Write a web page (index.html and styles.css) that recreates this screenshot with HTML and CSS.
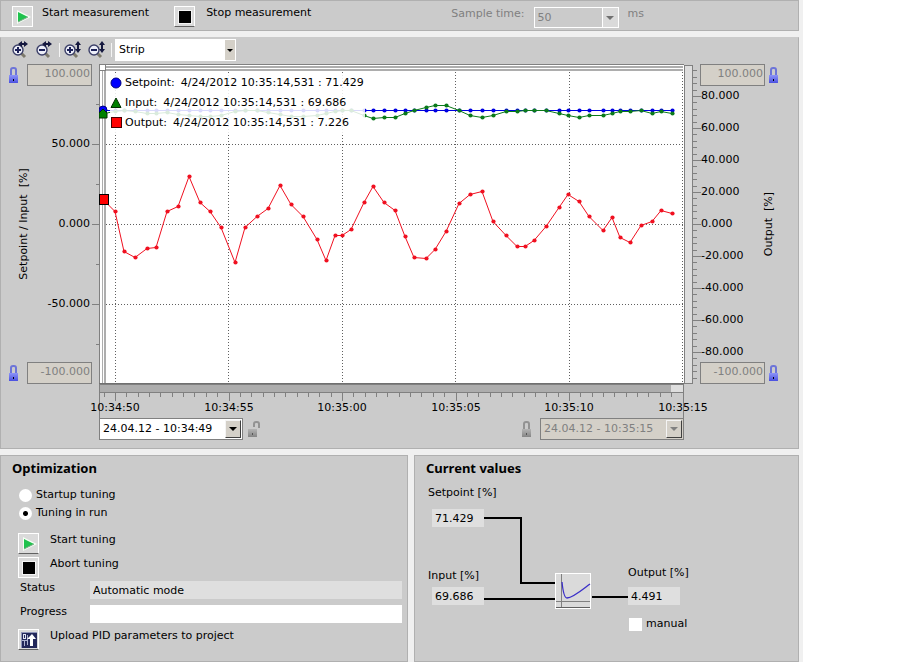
FILE: index.html
```html
<!DOCTYPE html>
<html lang="en">
<head>
    <meta charset="UTF-8">
    <meta name="viewport" content="width=device-width, initial-scale=1.0">
    <title>PID Commissioning</title>
    <link rel="stylesheet" href="styles.css">
</head>
<body>
    <!-- Shared icons -->
    <svg class="defs" aria-hidden="true">
        <defs>
            <linearGradient id="lock-blue" x1="0" y1="0" x2="0" y2="1">
                <stop offset="0" stop-color="#8d94f8"/>
                <stop offset="1" stop-color="#4a50e0"/>
            </linearGradient>
            <linearGradient id="lock-gray" x1="0" y1="0" x2="0" y2="1">
                <stop offset="0" stop-color="#b4b4b4"/>
                <stop offset="1" stop-color="#858585"/>
            </linearGradient>
            <symbol id="play" viewBox="0 0 18 18">
                <path d="M3 2 L17 9 L3 16 Z" fill="#f4fff4"/>
                <path d="M4 4 L14 9 L4 14 Z" fill="#1fc24d"/>
                <path d="M4 14 L14 9" stroke="#7ea88a"/>
            </symbol>
            <symbol id="stop" viewBox="0 0 18 18">
                <rect x="2" y="2" width="14" height="14" fill="#f4f4f4"/>
                <rect x="3" y="3" width="12" height="12" fill="#000"/>
            </symbol>
            <symbol id="upload" viewBox="0 0 18 18">
                <rect x="1" y="1" width="16" height="16" fill="#8f95b8"/>
                <rect x="2" y="2" width="15" height="15" fill="#23285a"/>
                <rect x="3.5" y="3.5" width="2" height="4" fill="none" stroke="#dfe2f2"/>
                <path d="M4.5 10 V15 M2 9.5 H7 M7.500 4 V14" stroke="#aeb3d0" fill="none"/>
                <path d="M12 3 L16 8 H13 V15 H10 V8 H7 Z" fill="#fff"/>
            </symbol>
            <symbol id="glass" viewBox="0 0 21 18">
                <path d="M10 12 L14 16" stroke="#7d7a6c" stroke-width="3"/>
                <circle cx="7" cy="9" r="5" fill="#eceef8" stroke="#3b3f68" stroke-width="1.4"/>
            </symbol>
            <symbol id="arrows-h" viewBox="0 0 21 18">
                <path d="M7 3 L11 0 V2 H13 V0 L17 3 L13 6 V4 H11 V6 Z" fill="#15183f" stroke="none"/>
            </symbol>
            <symbol id="arrows-v" viewBox="0 0 21 18">
                <path d="M15 0 L18 4 H16 V8 H18 L15 12 L12 8 H14 V4 H12 Z" fill="#15183f" stroke="none"/>
            </symbol>
            <symbol id="lock" viewBox="0 0 12 17">
                <path d="M3 8 V3 Q3 1 5 1 H6 Q8 1 8 3 V8" fill="none" stroke="#6c74d8" stroke-width="2"/>
                <rect x="1" y="8" width="9" height="8" fill="url(#lock-blue)"/>
                <rect x="5" y="12" width="1" height="2" fill="#000"/>
            </symbol>
            <symbol id="lock-off" viewBox="0 0 12 17">
                <path d="M3 8 V3 Q3 1 5 1 H6 Q8 1 8 3 V8" fill="none" stroke="#939393" stroke-width="2"/>
                <rect x="1" y="8" width="9" height="8" fill="url(#lock-gray)"/>
                <rect x="5" y="12" width="1" height="2" fill="#555"/>
            </symbol>
            <symbol id="lock-open" viewBox="0 0 14 17">
                <path d="M7 6 V3 Q7 1 9 1 H10 Q12 1 12 3 V7" fill="none" stroke="#939393" stroke-width="2"/>
                <rect x="1" y="8" width="9" height="8" fill="url(#lock-gray)"/>
                <rect x="5" y="12" width="1" height="2" fill="#555"/>
            </symbol>
        </defs>
    </svg>

    <div class="app">
        <section class="panel measure-bar">
            <button class="action"><span class="box flat"><svg><use href="#play"/></svg></span>Start measurement</button>
            <button class="action"><span class="box"><svg><use href="#stop"/></svg></span>Stop measurement</button>
            <div class="sample">
                <label for="sample-time">Sample time:</label>
                <span class="combo combo-sample">
                    <select id="sample-time" disabled><option>50</option></select>
                    <span class="arrow"></span>
                </span>
                <span>ms</span>
            </div>
        </section>

        <section class="panel trend">
            <div class="toolbar">
                <button class="tool" aria-label="Zoom in time"><svg><use href="#glass"/><use href="#arrows-h"/><path d="M4 9 H10 M7 6 V12"/></svg></button>
                <button class="tool" aria-label="Zoom out time"><svg><use href="#glass"/><use href="#arrows-h"/><path d="M4 9 H10"/></svg></button>
                <span class="sep"></span>
                <button class="tool" aria-label="Zoom in value"><svg><use href="#glass"/><use href="#arrows-v"/><path d="M4 9 H10 M7 6 V12"/></svg></button>
                <button class="tool" aria-label="Zoom out value"><svg><use href="#glass"/><use href="#arrows-v"/><path d="M4 9 H10"/></svg></button>
                <span class="sep"></span>
                <span class="combo combo-view">
                    <select aria-label="View"><option>Strip</option></select>
                    <span class="arrow"></span>
                </span>
            </div>

            <div class="chart">
                <div class="axis axis-left">
                    <svg class="scale" id="scale-left" viewBox="0 0 98 320">
                        <text class="axis-title" transform="translate(26 160) rotate(-90)">Setpoint / Input&nbsp; [%]</text>
                    </svg>
                    <div class="limits">
                        <div class="limit"><svg class="lock"><use href="#lock"/></svg><input aria-label="Left maximum" value="100.000" disabled></div>
                        <div class="limit"><svg class="lock"><use href="#lock"/></svg><input aria-label="Left minimum" value="-100.000" disabled></div>
                    </div>
                </div>

                <div class="plot">
                    <svg id="plot" viewBox="0 0 585 320" preserveAspectRatio="none">
                        <rect width="585" height="320" fill="#fff"/>
                        <g id="grid" class="grid"></g>
                        <g fill="#adadad">
                            <rect x="2" y="2" width="582" height="2"/>
                            <rect x="2" y="5" width="582" height="2"/>
                            <rect x="3" y="2" width="1" height="318"/>
                            <rect x="5" y="2" width="2" height="318"/>
                        </g>
                        <path d="M0.5 320 V0.5 H585" fill="none" stroke="#808080"/>
                        <path d="M0 319.5 H585" stroke="#707070"/>
                        <rect x="0.5" y="0.5" width="6" height="6" fill="#fff" stroke="#808080"/>
                        <g id="series"></g>
                        <circle cx="4" cy="46" r="4" fill="#00f" stroke="#000080"/>
                        <path d="M0 54 V49 L4 45 L8 49 V54 Z" fill="#008000" stroke="#003000"/>
                        <rect x="0.5" y="130.5" width="9" height="10" fill="#f00" stroke="#000"/>
                    </svg>
                    <ul class="legend">
                        <li><svg><circle cx="6" cy="6" r="5" fill="#00f" stroke="#000080"/></svg>Setpoint:<span>4/24/2012 10:35:14,531 : 71.429</span></li>
                        <li><svg><path d="M6 1 L11 10.5 H1 Z" fill="#008000" stroke="#003000"/></svg>Input:<span>4/24/2012 10:35:14,531 : 69.686</span></li>
                        <li><svg><rect x="1.5" y="0.5" width="10" height="10" fill="#f00" stroke="#400"/></svg>Output:<span>4/24/2012 10:35:14,531 : 7.226</span></li>
                    </ul>
                </div>

                <div class="axis axis-right">
                    <svg class="scale" id="scale-right" viewBox="0 0 114 320">
                        <rect x="0.5" y="1.5" width="8" height="318" fill="#dedede" stroke="#808080"/>
                        <text class="axis-title" transform="translate(88 160) rotate(-90)">Output&nbsp; [%]</text>
                    </svg>
                    <div class="limits">
                        <div class="limit"><input aria-label="Right maximum" value="100.000" disabled><svg class="lock"><use href="#lock"/></svg></div>
                        <div class="limit"><input aria-label="Right minimum" value="-100.000" disabled><svg class="lock"><use href="#lock"/></svg></div>
                    </div>
                </div>

                <svg class="time-scale" id="time-scale" viewBox="0 0 585 34">
                    <rect x="0.5" y="0.5" width="584" height="8" fill="#adadad" stroke="#808080"/>
                    <rect x="572" y="1" width="12" height="7" fill="#dedede"/>
                    <path d="M0.5 8 V34 M584.5 8 V34" stroke="#808080"/>
                </svg>

                <div class="range">
                    <span class="combo combo-date">
                        <select aria-label="From"><option>24.04.12 - 10:34:49</option></select>
                        <span class="arrow"></span>
                    </span>
                    <svg class="lock lock-wide"><use href="#lock-open"/></svg>
                    <svg class="lock push"><use href="#lock-off"/></svg>
                    <span class="combo combo-date">
                        <select aria-label="To" disabled><option>24.04.12 - 10:35:15</option></select>
                        <span class="arrow"></span>
                    </span>
                </div>
            </div>
        </section>

        <div class="bottom">
            <section class="panel optimization">
                <h2>Optimization</h2>
                <div class="radios">
                    <label><input type="radio" name="mode">Startup tuning</label>
                    <label><input type="radio" name="mode" checked>Tuning in run</label>
                </div>
                <div class="rows">
                    <button class="action"><span class="box"><svg><use href="#play"/></svg></span>Start tuning</button>
                    <button class="action"><span class="box flat"><svg><use href="#stop"/></svg></span>Abort tuning</button>
                    <div class="field"><label for="status">Status</label><input id="status" value="Automatic mode" readonly></div>
                    <div class="field"><label for="progress">Progress</label><input id="progress" class="blank" readonly></div>
                    <button class="action"><span class="box"><svg><use href="#upload"/></svg></span>Upload PID parameters to project</button>
                </div>
            </section>

            <section class="panel values">
                <h2>Current values</h2>
                <div class="diagram">
                    <svg class="wires" viewBox="0 0 270 160">
                        <path d="M54 35 H91 V100 H127 M54 116 H128 M162 114 H199" fill="none" stroke="#000" stroke-width="2"/>
                    </svg>
                    <div class="node node-setpoint"><label for="v-set">Setpoint [%]</label><input id="v-set" value="71.429" readonly></div>
                    <div class="node node-input"><label for="v-in">Input [%]</label><input id="v-in" value="69.686" readonly></div>
                    <svg class="pid" viewBox="0 0 36 36">
                        <rect x="0.5" y="0.5" width="35" height="35" fill="#dadada" stroke="#fff"/>
                        <path d="M6.500 1 V34 M1 28.500 H35" stroke="#808080" fill="none"/>
                        <path d="M1 34.500 H35" stroke="#606060"/>
                        <path d="M7 9 C8 19 10 25 12 25 C18 25 27 17 35 11" fill="none" stroke="#3a2fc8" stroke-width="1.3"/>
                    </svg>
                    <div class="node node-output"><label for="v-out">Output [%]</label><input id="v-out" value="4.491" readonly></div>
                    <label class="manual"><input type="checkbox">manual</label>
                </div>
            </section>
        </div>
    </div>

    <script src="chart.js"></script>
</body>
</html>
```
FILE: styles.css
```css
* {
    box-sizing: border-box;
}
body {
    margin: 0;
    background-color: #fff;
    color: #000;
    font-family: "DejaVu Sans", Verdana, sans-serif;
    font-size: 11px;
    line-height: 14px;
}
button, input, select {
    font: inherit;
    color: inherit;
    margin: 0;
    border-radius: 0;
}
svg {
    display: block;
}
.defs {
    position: absolute;
    width: 0;
    height: 0;
}
.app {
    max-width: 803px;
    padding-right: 4px;
    background-color: #f0f0f0;
    display: flex;
    flex-direction: column;
    gap: 6px;
}
.panel {
    background-color: #cbcbcb;
    border: 1px solid #b0b0b0;
}
h2 {
    margin: 0;
    font-family: "Noto Sans", sans-serif;
    font-size: 13px;
    line-height: 18px;
    font-weight: bold;
}

/* Buttons with an icon box */
.action {
    display: flex;
    align-items: flex-start;
    padding: 0;
    border: none;
    background: none;
    gap: 11px;
    text-align: left;
    cursor: pointer;
}
.box {
    width: 21px;
    height: 21px;
    border: 1px solid #fff;
    border-bottom-color: #606060;
    background-color: #dadada;
    display: flex;
    align-items: center;
    justify-content: center;
}
.box.flat {
    border-bottom-color: #fff;
}
.box svg {
    width: 18px;
    height: 18px;
}

/* Top bar */
.measure-bar {
    display: flex;
    align-items: flex-start;
    gap: 25px;
    height: 31px;
    padding: 5px 11px 0;
}
.measure-bar .action {
    gap: 9px;
}
.measure-bar .action + .action {
    gap: 11px;
}
.sample {
    display: flex;
    gap: 9px;
    margin-left: auto;
    margin-right: 143px;
    padding-top: 1px;
    color: #808080;
}

/* Drop-downs */
.combo {
    position: relative;
    display: block;
}
.combo select {
    appearance: none;
    display: block;
    width: 100%;
    height: 100%;
    padding: 0 3px;
    border: 1px solid #fff;
    background-color: #fff;
    opacity: 1;
}
.arrow {
    position: absolute;
    top: 1px;
    right: 1px;
    bottom: 1px;
    width: 10px;
    background-color: #d4d0c8;
    display: flex;
    align-items: center;
    justify-content: center;
    pointer-events: none;
}
.arrow::after {
    content: "";
    border: 3px solid transparent;
    border-top-color: #000;
    border-bottom: none;
}
.combo-sample {
    width: 85px;
    height: 21px;
}
.combo-sample select {
    background-color: #cbcbcb;
    color: #808080;
}
.combo-sample .arrow {
    width: 16px;
    background-color: #dadada;
    border-left: 1px solid #fff;
}
.combo-sample .arrow::after, .combo-date .arrow::after {
    border-width: 4px;
    border-bottom: none;
}
.combo-sample .arrow::after {
    border-top-color: #707070;
}
.combo-view {
    width: 121px;
    height: 22px;
}
.combo-date {
    width: 144px;
    height: 22px;
}
.combo-date select {
    border-color: #808080;
}
.combo-date select:disabled {
    background-color: #d4d0c8;
    color: #808080;
}
.combo-date .arrow {
    top: 2px;
    right: 2px;
    bottom: 2px;
    width: 16px;
    border: 1px solid;
    border-color: #f4f4f4 #404040 #404040 #f4f4f4;
}
.combo-date select:disabled + .arrow::after {
    border-top-color: #808080;
}

/* Trend view */
.trend {
    border-top-color: #cbcbcb;
    padding-bottom: 8px;
}
.toolbar {
    display: flex;
    align-items: center;
    gap: 3px;
    height: 26px;
    padding: 1px 0 3px 10px;
}
.tool {
    width: 21px;
    height: 18px;
    padding: 0;
    border: none;
    background: none;
    cursor: pointer;
}
.tool svg {
    width: 21px;
    height: 18px;
    fill: none;
    stroke: #1c2158;
    stroke-width: 2;
}
.sep {
    width: 1px;
    height: 14px;
    background-color: #f4f4f4;
}
.chart {
    display: grid;
    grid-template-columns: 98px 1fr 114px;
}
.axis {
    display: grid;
}
.axis > * {
    grid-area: 1 / 1;
}
.scale {
    width: 100%;
    height: 320px;
    overflow: visible;
}
.scale text, .time-scale text {
    font-size: 11px;
    fill: #000;
}
.axis-title, .time-scale text {
    text-anchor: middle;
}
#scale-left .tick-label {
    text-anchor: end;
}
.tick {
    stroke: #808080;
}
.limits {
    display: flex;
    flex-direction: column;
    justify-content: space-between;
}
.limit {
    display: flex;
    align-items: center;
    gap: 7px;
    padding-left: 7px;
}
.axis-right .limit {
    gap: 3px;
    padding-left: 16px;
}
.limit input {
    width: 65px;
    height: 22px;
    padding: 0 1px 3px;
    border: 1px solid #808080;
    background-color: #d4d0c8;
    color: #808080;
    text-align: right;
}
.lock {
    width: 12px;
    height: 17px;
}
.lock-wide {
    width: 14px;
}
.plot {
    position: relative;
}
#plot {
    width: 100%;
    height: 320px;
}
.grid line {
    stroke: #606060;
    stroke-dasharray: 1 2;
}
.legend {
    position: absolute;
    top: 9px;
    left: 11px;
    width: 255px;
    margin: 0;
    padding: 0;
    list-style: none;
    background-color: rgba(255, 255, 255, 0.85);
}
.legend li {
    display: flex;
    align-items: center;
    height: 20px;
    gap: 2px;
    white-space: nowrap;
}
.legend svg {
    flex-shrink: 0;
    width: 13px;
    height: 13px;
}
.legend span {
    margin-left: 4px;
}
.time-scale {
    grid-column: 2;
    width: 100%;
    height: 34px;
    overflow: visible;
}
.range {
    grid-column: 2;
    display: flex;
    align-items: center;
    gap: 4px;
}
.push {
    margin-left: auto;
    margin-right: 3px;
}

/* Bottom panels */
.bottom {
    display: grid;
    grid-template-columns: minmax(0, 408fr) minmax(0, 385fr);
    gap: 6px;
}
.optimization {
    padding: 3px 5px 11px 11px;
}
.radios {
    display: flex;
    flex-direction: column;
    gap: 4px;
    padding: 11px 0 0 7px;
}
.radios label {
    display: flex;
    align-items: center;
    gap: 4px;
}
.radios input {
    appearance: none;
    width: 13px;
    height: 13px;
    border-radius: 50%;
    background-color: #fff;
}
.radios input:checked {
    background-image: radial-gradient(circle, #000 2px, transparent 3px);
}
.rows {
    display: flex;
    flex-direction: column;
    gap: 3px;
    padding: 13px 0 0 6px;
}
.field {
    display: grid;
    grid-template-columns: 70px 1fr;
    height: 21px;
    padding-left: 2px;
}
.field input, .node input {
    width: 100%;
    height: 18px;
    padding: 0 3px;
    border: none;
    background-color: #dfdfdf;
}
.field .blank {
    background-color: #fff;
}
.values {
    padding: 3px 11px;
}
.diagram {
    position: relative;
    height: 160px;
    margin: 1px 0 0 2px;
}
.wires {
    position: absolute;
    top: 5px;
    left: 2px;
    width: 270px;
    height: 160px;
}
.node {
    position: absolute;
    display: flex;
    flex-direction: column;
    width: 80px;
}
.node input {
    width: 52px;
}
.node-setpoint {
    top: 8px;
    left: 0;
    gap: 9px;
}
.node-input {
    top: 91px;
    left: 0;
    gap: 4px;
}
.node-setpoint input, .node-input input {
    margin-left: 4px;
}
.node-output {
    top: 88px;
    left: 200px;
    gap: 7px;
}
.pid {
    position: absolute;
    top: 95px;
    left: 127px;
    width: 36px;
    height: 36px;
}
.manual {
    position: absolute;
    top: 139px;
    left: 201px;
    display: flex;
    align-items: center;
    gap: 4px;
}
.manual input {
    appearance: none;
    width: 13px;
    height: 13px;
    background-color: #fff;
}
.manual input:checked {
    background-color: #000;
    border: 3px solid #fff;
}
```
FILE: chart.js
```js
const SVG_NS = 'http://www.w3.org/2000/svg';

// sample positions and readings, in plot units
const xs = [5, 16, 25, 36, 48, 57, 68, 79, 90, 101, 111, 122, 136, 146, 158, 169, 181, 192, 204, 218,
    227, 236, 243, 252, 265, 274, 285, 296, 306, 315, 327, 336, 347, 360, 371, 383, 394, 407, 418, 426,
    435, 447, 460, 469, 480, 490, 504, 513, 521, 531, 542, 553, 562, 573];
const setpoint = xs.map(() => 46);
const input = [49, 47, 46, 47, 49, 49, 48, 50, 51, 52, 52, 51, 47, 46, 46, 48, 50, 52, 52, 51,
    49, 47, 46, 46, 51, 54, 53, 53, 49, 46, 43, 41, 41, 46, 51, 53, 51, 47, 47, 46,
    46, 46, 49, 51, 53, 51, 51, 49, 47, 47, 46, 49, 47, 49];
const output = [136, 147, 187, 193, 184, 183, 147, 142, 112, 138, 147, 163, 198, 163, 152, 144, 121, 140, 152, 175,
    196, 171, 171, 165, 138, 122, 138, 146, 172, 193, 194, 185, 167, 139, 130, 127, 157, 171, 182, 182,
    176, 162, 143, 130, 137, 152, 166, 153, 173, 178, 161, 157, 146, 149];

function add(parent, name, attrs, text) {
    const el = document.createElementNS(SVG_NS, name);
    Object.entries(attrs).forEach(([key, value]) => el.setAttribute(key, value));
    if (text) el.textContent = text;
    parent.appendChild(el);
}

function line(parent, x1, y1, x2, y2) {
    add(parent, 'line', { x1, y1, x2, y2, class: 'tick' });
}

function drawSeries(ys, color) {
    const group = document.getElementById('series');
    const points = xs.map((x, i) => `${x},${ys[i] + 0.5}`).join(' ');
    add(group, 'polyline', { points, fill: 'none', stroke: color });
    xs.forEach((x, i) => add(group, 'circle', { cx: x + 0.5, cy: ys[i] + 0.5, r: 2.1, fill: color }));
}

function drawGrid() {
    const grid = document.getElementById('grid');
    [16, 129, 243, 356, 470, 583].forEach(x => line(grid, x + 0.5, 2, x + 0.5, 320));
    [80, 160, 240].forEach(y => line(grid, 7, y + 0.5, 585, y + 0.5));
}

function drawLeftScale() {
    const scale = document.getElementById('scale-left');
    [50, 0, -50].forEach(v => {
        const y = 160 - v * 1.6;
        line(scale, 91, y + 0.5, 98, y + 0.5);
        add(scale, 'text', { x: 89, y: y + 3, class: 'tick-label' }, v.toFixed(3));
    });
    [40, 120, 200, 280].forEach(y => line(scale, 95, y + 0.5, 98, y + 0.5));
}

function drawRightScale() {
    const scale = document.getElementById('scale-right');
    for (let v = -96; v <= 96; v += 4) {
        const y = Math.round(160 - v * 1.6);
        line(scale, 9, y + 0.5, v % 20 ? 13 : 17, y + 0.5);
        if (v % 20 === 0) {
            add(scale, 'text', { x: 17, y: y + 3, class: 'tick-label' }, v.toFixed(3));
        }
    }
}

function drawTimeScale() {
    const scale = document.getElementById('time-scale');
    for (let i = -1; i <= 50; i++) {
        const x = Math.round(16 + i * 11.35);
        if (x > 584) break;
        line(scale, x + 0.5, 9, x + 0.5, i % 10 ? 13 : 17);
    }
    ['10:34:50', '10:34:55', '10:35:00', '10:35:05', '10:35:10', '10:35:15'].forEach((label, i) => {
        add(scale, 'text', { x: Math.round(16 + i * 113.5), y: 27 }, label);
    });
}

drawGrid();
drawSeries(setpoint, '#0000e0');
drawSeries(input, '#0a7a1a');
drawSeries(output, '#f01020');
drawLeftScale();
drawRightScale();
drawTimeScale();
```
